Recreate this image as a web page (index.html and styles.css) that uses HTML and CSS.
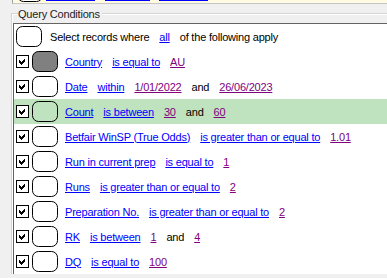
FILE: index.html
```html
<!DOCTYPE html>
<html>
<head>
<meta charset="utf-8">
<link rel="stylesheet" href="styles.css">
</head>
<body>
<div class="prev">
  <svg class="prev-oval" width="26" height="21" viewBox="0 0 26 21"><rect x="0.5" y="0.5" width="25" height="20" rx="6" ry="6" fill="#fff" stroke="#000"/></svg>
  <span class="prev-link pl1"></span>
  <span class="prev-link pl2"></span>
  <span class="prev-link pl3"></span>
</div>
<div class="group">
  <div class="group-head"><span class="corner"></span><span class="legend">Query Conditions</span><span class="rule"></span></div>
  <div class="group-body">
    <div class="panel">
      <div class="row row0">
        <svg class="oval" width="26" height="21" viewBox="0 0 26 21"><rect x="0.5" y="0.5" width="25" height="20" rx="6" ry="6" fill="#fff" stroke="#000"/></svg>
        <div class="clauses"><span>Select records where</span><span class="f">all</span><span>of the following apply</span></div>
      </div>
      <div class="row">
        <svg class="cb" width="13" height="13" viewBox="0 0 13 13"><rect x="0.5" y="0.5" width="12" height="12" fill="#fff" stroke="#000"/><polygon points="3,5 5,7 9,3 9,6 5,10 3,8" fill="#000"/></svg>
        <svg class="oval" width="26" height="21" viewBox="0 0 26 21"><rect x="0.5" y="0.5" width="25" height="20" rx="6" ry="6" fill="#808080" stroke="#000"/></svg>
        <div class="clauses"><span class="f">Country</span><span class="f">is equal to</span><span class="v">AU</span></div>
      </div>
      <div class="row">
        <svg class="cb" width="13" height="13" viewBox="0 0 13 13"><rect x="0.5" y="0.5" width="12" height="12" fill="#fff" stroke="#000"/><polygon points="3,5 5,7 9,3 9,6 5,10 3,8" fill="#000"/></svg>
        <svg class="oval" width="26" height="21" viewBox="0 0 26 21"><rect x="0.5" y="0.5" width="25" height="20" rx="6" ry="6" fill="#fff" stroke="#000"/></svg>
        <div class="clauses"><span class="f">Date</span><span class="f">within</span><span class="v">1/01/2022</span><span>and</span><span class="v">26/06/2023</span></div>
      </div>
      <div class="row sel">
        <svg class="cb" width="13" height="13" viewBox="0 0 13 13"><rect x="0.5" y="0.5" width="12" height="12" fill="#fff" stroke="#000"/><polygon points="3,5 5,7 9,3 9,6 5,10 3,8" fill="#000"/></svg>
        <svg class="oval" width="26" height="21" viewBox="0 0 26 21"><rect x="0.5" y="0.5" width="25" height="20" rx="6" ry="6" fill="none" stroke="#000"/></svg>
        <div class="clauses"><span class="f">Count</span><span class="f">is between</span><span class="v">30</span><span>and</span><span class="v">60</span></div>
      </div>
      <div class="row">
        <svg class="cb" width="13" height="13" viewBox="0 0 13 13"><rect x="0.5" y="0.5" width="12" height="12" fill="#fff" stroke="#000"/><polygon points="3,5 5,7 9,3 9,6 5,10 3,8" fill="#000"/></svg>
        <svg class="oval" width="26" height="21" viewBox="0 0 26 21"><rect x="0.5" y="0.5" width="25" height="20" rx="6" ry="6" fill="#fff" stroke="#000"/></svg>
        <div class="clauses"><span class="f">Betfair WinSP (True Odds)</span><span class="f">is greater than or equal to</span><span class="v">1.01</span></div>
      </div>
      <div class="row">
        <svg class="cb" width="13" height="13" viewBox="0 0 13 13"><rect x="0.5" y="0.5" width="12" height="12" fill="#fff" stroke="#000"/><polygon points="3,5 5,7 9,3 9,6 5,10 3,8" fill="#000"/></svg>
        <svg class="oval" width="26" height="21" viewBox="0 0 26 21"><rect x="0.5" y="0.5" width="25" height="20" rx="6" ry="6" fill="#fff" stroke="#000"/></svg>
        <div class="clauses"><span class="f">Run in current prep</span><span class="f">is equal to</span><span class="v">1</span></div>
      </div>
      <div class="row">
        <svg class="cb" width="13" height="13" viewBox="0 0 13 13"><rect x="0.5" y="0.5" width="12" height="12" fill="#fff" stroke="#000"/><polygon points="3,5 5,7 9,3 9,6 5,10 3,8" fill="#000"/></svg>
        <svg class="oval" width="26" height="21" viewBox="0 0 26 21"><rect x="0.5" y="0.5" width="25" height="20" rx="6" ry="6" fill="#fff" stroke="#000"/></svg>
        <div class="clauses"><span class="f">Runs</span><span class="f">is greater than or equal to</span><span class="v">2</span></div>
      </div>
      <div class="row">
        <svg class="cb" width="13" height="13" viewBox="0 0 13 13"><rect x="0.5" y="0.5" width="12" height="12" fill="#fff" stroke="#000"/><polygon points="3,5 5,7 9,3 9,6 5,10 3,8" fill="#000"/></svg>
        <svg class="oval" width="26" height="21" viewBox="0 0 26 21"><rect x="0.5" y="0.5" width="25" height="20" rx="6" ry="6" fill="#fff" stroke="#000"/></svg>
        <div class="clauses"><span class="f">Preparation No.</span><span class="f">is greater than or equal to</span><span class="v">2</span></div>
      </div>
      <div class="row">
        <svg class="cb" width="13" height="13" viewBox="0 0 13 13"><rect x="0.5" y="0.5" width="12" height="12" fill="#fff" stroke="#000"/><polygon points="3,5 5,7 9,3 9,6 5,10 3,8" fill="#000"/></svg>
        <svg class="oval" width="26" height="21" viewBox="0 0 26 21"><rect x="0.5" y="0.5" width="25" height="20" rx="6" ry="6" fill="#fff" stroke="#000"/></svg>
        <div class="clauses"><span class="f">RK</span><span class="f">is between</span><span class="v">1</span><span>and</span><span class="v">4</span></div>
      </div>
      <div class="row">
        <svg class="cb" width="13" height="13" viewBox="0 0 13 13"><rect x="0.5" y="0.5" width="12" height="12" fill="#fff" stroke="#000"/><polygon points="3,5 5,7 9,3 9,6 5,10 3,8" fill="#000"/></svg>
        <svg class="oval" width="26" height="21" viewBox="0 0 26 21"><rect x="0.5" y="0.5" width="25" height="20" rx="6" ry="6" fill="#fff" stroke="#000"/></svg>
        <div class="clauses"><span class="f">DQ</span><span class="f">is equal to</span><span class="v">100</span></div>
      </div>
    </div>
  </div>
</div>
</body>
</html>
```
FILE: styles.css
```css
body {
  margin: 0;
  width: 387px;
  height: 278px;
  overflow: hidden;
  background: #f0f0f0;
  font-family: "Liberation Sans", Arial, sans-serif;
  font-size: 11px;
  letter-spacing: -0.2px;
  color: #000;
}
.prev {
  display: flex;
  height: 3px;
  margin-left: 12px;
  border-left: 1px solid #a0a0a0;
  border-bottom: 1px solid #c6c6c6;
  background: #fffbe2;
  overflow: hidden;
}
.prev-oval {
  flex: none;
  margin: -19px 0 0 4px;
}
.prev-link {
  flex: none;
  height: 1px;
  background: #0000ff;
}
.pl1 { margin-left: 3px; width: 49px; }
.pl2 { margin-left: 10px; width: 45px; }
.pl3 { margin-left: 9px; width: 49px; }
.group {
  margin-left: 11px;
}
.group-head {
  display: flex;
  height: 19px;
}
.corner {
  flex: none;
  width: 6px;
  margin-top: 9px;
  border-top: 1px solid #d5d5d5;
  border-left: 1px solid #d5d5d5;
  box-shadow: inset 1px 1px 0 #fff;
}
.legend {
  flex: none;
  margin-top: 4px;
  padding-right: 2px;
  height: 13px;
  line-height: 13px;
  color: #222;
}
.rule {
  flex: 1;
  margin-top: 9px;
  border-top: 1px solid #d5d5d5;
  box-shadow: inset 0 1px 0 #fff;
}
.group-body {
  border-left: 1px solid #d5d5d5;
  box-shadow: inset 1px 0 0 #fff;
  padding-left: 1px;
}
.panel {
  height: 250px;
  overflow: hidden;
  background: #fff;
  border-top: 1px solid #646464;
  border-left: 1px solid #646464;
}
.row {
  display: flex;
  align-items: center;
  height: 25px;
  padding-left: 2px;
}
.row.sel {
  background: #bfe2bf;
}
.cb {
  flex: none;
  margin-right: 3px;
  shape-rendering: crispEdges;
}
.oval {
  flex: none;
  margin-right: 7px;
}
.row0 .oval {
  margin-right: 8px;
}
.clauses {
  display: flex;
  gap: 10px;
  white-space: nowrap;
}
.f {
  color: #0000ff;
  text-decoration: underline;
}
.v {
  color: #800080;
  text-decoration: underline;
}
```
